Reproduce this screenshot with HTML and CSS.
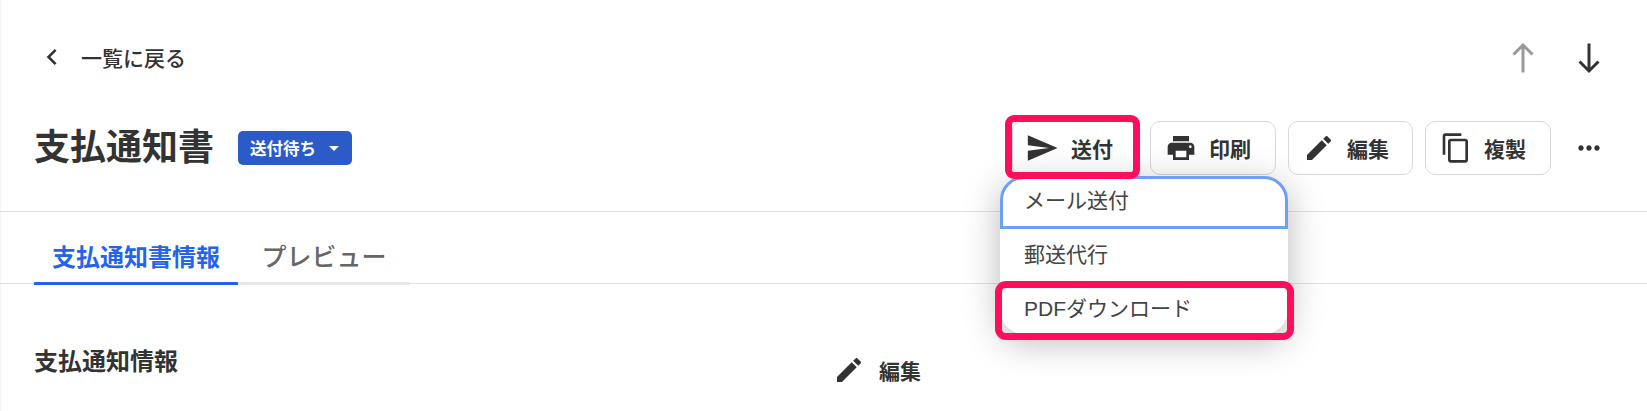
FILE: index.html
```html
<!DOCTYPE html>
<html lang="ja">
<head>
  <meta charset="UTF-8">
  <title>支払通知書</title>
  <link rel="stylesheet" href="styles.css">
</head>
<body>
  <header class="top-row">
    <a class="back-link" href="#">
      <svg class="back-icon" viewBox="0 0 24 24"><path d="M15.4 7.4 14 6l-6 6 6 6 1.4-1.4L10.8 12z"/></svg>
      一覧に戻る
    </a>
    <div class="pager">
      <svg class="pager-icon is-off" viewBox="0 0 24 32"><path d="M12 30.5V3M2.5 12.5 12 3l9.5 9.5"/></svg>
      <svg class="pager-icon" viewBox="0 0 24 32"><path d="M12 1.5V29M2.5 19.5 12 29l9.5-9.5"/></svg>
    </div>
  </header>

  <section class="title-row">
    <div class="title-left">
      <h1>支払通知書</h1>
      <span class="status">送付待ち<i class="caret"></i></span>
    </div>
    <div class="actions">
      <div class="send-wrap">
        <button class="btn btn-send">
          <svg viewBox="0 0 24 24"><path d="M2 21l21-9L2 3v7l15 2-15 2z"/></svg>
          送付
        </button>
        <div class="mark mark-send"></div>
        <ul class="menu">
          <li class="menu-item is-focus">メール送付</li>
          <li class="menu-item">郵送代行</li>
          <li class="menu-item is-last">PDFダウンロード<div class="mark mark-pdf"></div></li>
        </ul>
      </div>
      <button class="btn">
        <svg viewBox="0 0 24 24"><path d="M19 8H5c-1.66 0-3 1.34-3 3v6h4v4h12v-4h4v-6c0-1.66-1.34-3-3-3zm-3 11H8v-5h8v5zm3-7c-.55 0-1-.45-1-1s.45-1 1-1 1 .45 1 1-.45 1-1 1zm-1-9H6v4h12V3z"/></svg>
        印刷
      </button>
      <button class="btn btn-edit">
        <svg viewBox="0 0 24 24"><path d="M3 17.25V21h3.75L17.81 9.94l-3.75-3.75L3 17.25zM20.71 7.04c.39-.39.39-1.02 0-1.41l-2.34-2.34c-.39-.39-1.02-.39-1.41 0l-1.83 1.83 3.75 3.75 1.83-1.83z"/></svg>
        編集
      </button>
      <button class="btn">
        <svg viewBox="0 0 24 24"><path d="M16 1H4c-1.1 0-2 .9-2 2v14h2V3h12V1zm3 4H8c-1.1 0-2 .9-2 2v14c0 1.1.9 2 2 2h11c1.1 0 2-.9 2-2V7c0-1.1-.9-2-2-2zm0 16H8V7h11v14z"/></svg>
        複製
      </button>
      <svg class="more" viewBox="0 0 24 24"><path d="M6 10c-1.1 0-2 .9-2 2s.9 2 2 2 2-.9 2-2-.9-2-2-2zm12 0c-1.1 0-2 .9-2 2s.9 2 2 2 2-.9 2-2-.9-2-2-2zm-6 0c-1.1 0-2 .9-2 2s.9 2 2 2 2-.9 2-2-.9-2-2-2z"/></svg>
    </div>
  </section>

  <nav class="tabs">
    <a class="tab is-active" href="#">支払通知書情報</a>
    <a class="tab" href="#">プレビュー</a>
  </nav>

  <section class="info-head">
    <h2>支払通知情報</h2>
    <a class="edit-link" href="#">
      <svg viewBox="0 0 24 24"><path d="M3 17.25V21h3.75L17.81 9.94l-3.75-3.75L3 17.25zM20.71 7.04c.39-.39.39-1.02 0-1.41l-2.34-2.34c-.39-.39-1.02-.39-1.41 0l-1.83 1.83 3.75 3.75 1.83-1.83z"/></svg>
      編集
    </a>
  </section>
</body>
</html>
```

FILE: styles.css
```css
* {
  box-sizing: border-box;
}
html, body {
  height: 100%;
}
body {
  margin: 0;
  overflow: hidden;
  background: #fff;
  box-shadow: inset 1px 0 #f4f4f4;
  color: #333;
  font-family: "Liberation Sans", "Noto Sans CJK JP", sans-serif;
}
a {
  color: inherit;
  text-decoration: none;
}
svg {
  fill: currentColor;
  flex: none;
}

.top-row {
  display: flex;
  justify-content: space-between;
  align-items: center;
  height: 116px;
  padding: 0 46px 0 36px;
}
.back-link {
  display: flex;
  align-items: center;
  padding-bottom: 3px;
  font-size: 21px;
  font-weight: 500;
}
.back-icon {
  width: 32px;
  height: 32px;
  margin-right: 13px;
}
.pager {
  display: flex;
  gap: 42px;
}
.pager-icon {
  width: 24px;
  height: 32px;
  fill: none;
  stroke: currentColor;
  stroke-width: 3;
}
.pager-icon.is-off {
  color: #999;
}

.title-row {
  display: flex;
  justify-content: space-between;
  align-items: center;
  height: 64px;
  padding: 0 42px 0 34px;
}
.title-left {
  display: flex;
  align-items: center;
  gap: 24px;
}
h1 {
  margin: 0;
  font-size: 36px;
  font-weight: 700;
  line-height: 62px;
}
.status {
  display: flex;
  align-items: center;
  height: 34px;
  padding: 0 13px 0 12px;
  background: #2a5bc9;
  border-radius: 5px;
  color: #fff;
  font-size: 16.5px;
  font-weight: 700;
}
.caret {
  width: 0;
  height: 0;
  margin-left: 13px;
  border: 5px solid transparent;
  border-top-color: #fff;
  border-bottom: 0;
}

.actions {
  display: flex;
  align-items: center;
  gap: 12px;
}
.btn {
  display: flex;
  align-items: center;
  width: 126px;
  height: 54px;
  padding: 0 14px;
  gap: 12px;
  background: #fff;
  border: 1px solid #d9d9d9;
  border-radius: 10px;
  color: #333;
  font-family: inherit;
  font-size: 21px;
  font-weight: 700;
}
.btn svg {
  width: 32px;
  height: 32px;
}
.btn-send svg {
  width: 34px;
  height: 34px;
  margin-left: -2px;
}
.btn-edit {
  width: 125px;
}
.more {
  width: 32px;
  height: 32px;
  margin-left: 10px;
}

.send-wrap {
  position: relative;
}
.mark {
  position: absolute;
  border: 7px solid #ff0f5b;
  border-radius: 9px;
  pointer-events: none;
}
.mark-send {
  top: -6px;
  left: -7px;
  width: 135px;
  height: 64px;
  z-index: 3;
}
.menu {
  position: absolute;
  top: 55px;
  left: -12px;
  z-index: 2;
  width: 288px;
  margin: 0;
  padding: 0;
  list-style: none;
  background: #fff;
  border-radius: 24px;
  box-shadow: 0 8px 36px rgba(0, 0, 0, 0.28);
  color: #444;
  font-size: 21px;
}
.menu-item {
  position: relative;
  display: flex;
  align-items: center;
  height: 52px;
  padding: 0 24px 4px;
}
.is-focus {
  height: 53px;
  padding: 0 21px 8px;
  border: 3px solid #6f9ff5;
  border-radius: 24px 24px 0 0;
}
.is-last {
  height: 53px;
  padding-top: 2px;
  padding-bottom: 4px;
  border-radius: 0 0 24px 24px;
}
.mark-pdf {
  top: 0;
  left: -5px;
  width: 299px;
  height: 59px;
  border-radius: 11px;
}

.tabs {
  display: flex;
  height: 74px;
  margin-top: 31px;
  padding-left: 34px;
  border-top: 1px solid #e3e3e3;
  background: linear-gradient(#e3e3e3, #e3e3e3) left 0 bottom 1px / 100% 1px no-repeat;
}
.tab {
  display: flex;
  align-items: center;
  justify-content: center;
  width: 172px;
  height: 73px;
  padding-top: 16px;
  color: #666;
  font-size: 25px;
  font-weight: 500;
  border-bottom: 3px solid #e8e8e8;
}
.tab.is-active {
  width: 204px;
  color: #2563eb;
  font-size: 24px;
  font-weight: 700;
  border-bottom-color: #2563eb;
}

.info-head {
  display: flex;
  align-items: flex-start;
  padding: 60px 0 0 34px;
}
h2 {
  width: 799px;
  margin: 0;
  font-size: 24px;
  font-weight: 700;
  line-height: 34px;
}
.edit-link {
  display: flex;
  align-items: center;
  gap: 14px;
  margin-top: 9px;
  font-size: 21px;
  font-weight: 700;
}
.edit-link svg {
  width: 32px;
  height: 32px;
}
```
